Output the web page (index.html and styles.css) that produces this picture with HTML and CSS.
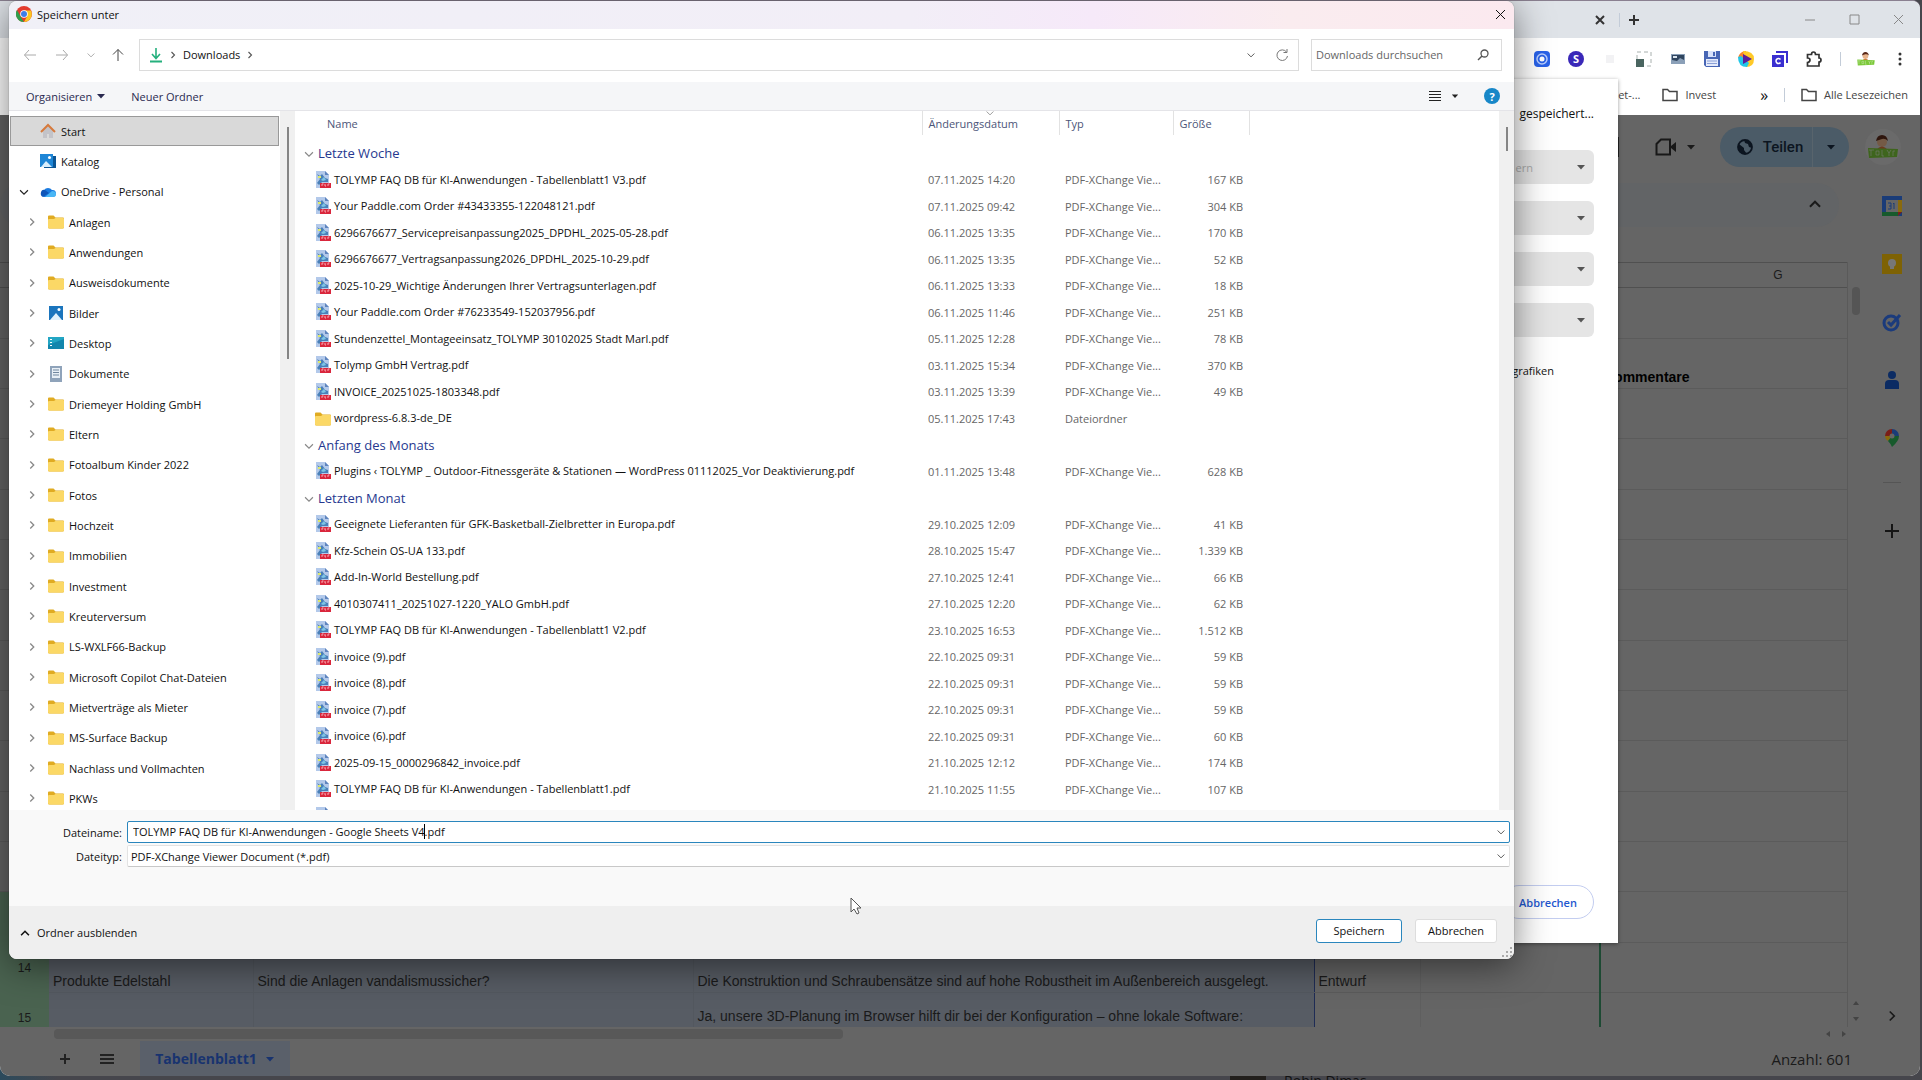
FILE: index.html
```html
<!DOCTYPE html>
<html lang="de">
<head>
  <meta charset="UTF-8">
  <title>Speichern unter</title>
  <link rel="stylesheet" href="styles.css">
</head>
<body>
  <!-- Icon definitions -->
  <svg class="defs" aria-hidden="true">
    <symbol id="folder" viewBox="0 0 16 16"><path d="M0 2.500Q0 1.500 1 1.500h4.500L7.500 3.500H15q1 0 1 1V13q0 1.500-1.500 1.500h-13Q0 14.500 0 13z" fill="#e0ab22"/><path d="M0 6q0-1 1-1h5l1.500-1H15q1 0 1 1v8q0 1.500-1.500 1.500h-13Q0 14.500 0 13z" fill="#fbd866"/></symbol>
    <symbol id="pdf" viewBox="0 0 16 18"><path d="M1 0h9l4 4v13H1z" fill="#b3c9ea"/><path d="M10 0v4h4z" fill="#5f84bd"/><path d="M2 3l3 2 2-2 3 4 3 1v3H7L4 14 2 12l3-4z" fill="#4a80b8"/><path d="M3 5h3v2H3z" fill="#dce86b"/><path d="M6 9l3-3 2 3-3 1z" fill="#7cc4e6"/><path d="M5 12h11v5H5z" fill="#d9263c"/><path d="M7 15v-2h1.500M10 13v2h1M13 15v-2h1.500" stroke="#f7a8b0" fill="none"/></symbol>
    <symbol id="right" viewBox="0 0 16 16"><path d="M6 4l4 4-4 4" fill="none" stroke="currentColor" stroke-width="1.500"/></symbol>
    <symbol id="down" viewBox="0 0 16 16"><path d="M3.500 6L8 10.500 12.500 6" fill="none" stroke="currentColor" stroke-width="1.300"/></symbol>
    <symbol id="up" viewBox="0 0 16 16"><path d="M3.500 10.500L8 6l4.500 4.500" fill="none" stroke="currentColor" stroke-width="1.800"/></symbol>
    <symbol id="caret" viewBox="0 0 10 10"><path d="M1 3h8L5 7.500z" fill="currentColor"/></symbol>
    <symbol id="outline-folder" viewBox="0 0 16 14"><path d="M1 1.500h4.500l2 2H15v9H1z" fill="none" stroke="currentColor" stroke-width="1.500"/></symbol>
    <symbol id="avatar" viewBox="0 0 32 24"><circle cx="15" cy="7" r="5" fill="#e8b48c"/><path d="M9 6q1-6 6-6t6 6q-3-3-6-2T9 6z" fill="#5b2a1a"/><path d="M9 15q6-7 12 0z" fill="#d9713a"/><path d="M1 13l30 1-1 8-28 1z" fill="#7cc93a"/><path d="M4 15v6M2 15h5M9 16h3v4H9zM15 15v6h2M20 15l2 3 2-3M22 18v3M26 21v-5h2" stroke="#fff" fill="none" opacity=".5"/></symbol>
  </svg>

  <!-- Browser -->
  <div class="browser">
    <div class="tabs">
      <button class="tab-close" aria-label="Tab schließen"><svg width="10" height="10"><path d="M1 1l8 8M9 1L1 9" stroke="#333" stroke-width="2"/></svg></button>
      <span class="bar"></span>
      <button class="tab-new" aria-label="Neuer Tab"><svg width="12" height="12"><path d="M6 1v10M1 6h10" stroke="#333" stroke-width="2"/></svg></button>
      <button class="win" aria-label="Minimieren"><svg width="10" height="10"><path d="M0 5h10" stroke="#888"/></svg></button>
      <button class="win" aria-label="Maximieren"><svg width="11" height="11"><path d="M1 1h9v9H1z" stroke="#888" fill="none"/></svg></button>
      <button class="win" aria-label="Schließen"><svg width="11" height="11"><path d="M1 1l9 9M10 1l-9 9" stroke="#888"/></svg></button>
    </div>

    <div class="extensions">
      <span><svg width="16" height="16"><rect width="16" height="16" rx="4" fill="#2962e8"/><circle cx="8" cy="8" r="5" fill="none" stroke="#b9ceff" stroke-width="1.500"/><circle cx="8" cy="8" r="2.500" fill="#fff"/></svg></span>
      <span><b class="badge-s">S</b></span>
      <span><svg width="8" height="8"><path d="M0 0h8v8H0z" fill="#f2f2f4"/></svg></span>
      <span><svg width="16" height="16"><path d="M1 1h14v14H1z" fill="none" stroke="#a8b0ae" stroke-dasharray="4 3"/><path d="M0 8h8v8H0z" fill="#4a6560"/></svg></span>
      <span><svg width="14" height="12"><path d="M0 1h14v10H0z" fill="#8ba0b8"/><path d="M1 2h12v5L9 5 6 8 1 7z" fill="#30455f"/><path d="M2 3h4v2H2z" fill="#d9e4ee"/></svg></span>
      <span><svg width="16" height="16"><path d="M0 0h16v16H2l-2-2z" fill="#4866b5"/><path d="M4 0h8v6H4z" fill="#d8e2fa"/><path d="M9 1h2v4H9z" fill="#4866b5"/><path d="M2 8h12v7H2z" fill="#e4eafb"/><path d="M3 10h10M3 12.500h10" stroke="#8ba1d8"/></svg></span>
      <span><svg width="16" height="16"><path d="M8 0a8 8 0 0 0-8 7l8 1z" fill="#f9822c"/><path d="M5 0q11 0 11 8t-8 8z" fill="#ffc928"/><path d="M0 6q0 10 9 10l2-4-8-7z" fill="#22c7e8"/><path d="M5 3l9 5-9 5z" fill="#5a1c9c"/></svg></span>
      <span><svg width="16" height="16"><path d="M4 1h11v11" fill="none" stroke="#3a2fd0" stroke-width="2"/><path d="M0 4h12v12H0z" fill="#3a2fd0"/><path d="M8.500 8.500a2.500 2.500 0 1 0 0 3" stroke="#fff" stroke-width="1.500" fill="none"/></svg></span>
      <span><svg width="16" height="16"><path d="M1.500 3.500h4q0-2.500 2-2.500t2 2.500H13V7q2 0 2 2t-2 2v4H1.500v-3.500q2.500-.5 2.500-2.500T1.500 7z" fill="none" stroke="#333" stroke-width="1.700"/></svg></span>
      <span class="narrow"><i class="bar"></i></span>
      <span><svg width="20" height="14"><use href="#avatar"/></svg></span>
      <span><svg width="4" height="16" fill="#333"><circle cx="2" cy="3" r="1.500"/><circle cx="2" cy="8" r="1.500"/><circle cx="2" cy="13" r="1.500"/></svg></span>
    </div>

    <div class="bookmarks">
      <a href="#" class="cut">et-...</a>
      <a href="#" class="invest"><svg width="16" height="14"><use href="#outline-folder"/></svg>Invest</a>
      <span class="more">»</span>
      <span class="bar"></span>
      <a href="#" class="all"><svg width="16" height="14"><use href="#outline-folder"/></svg>Alle Lesezeichen</a>
    </div>

    <!-- Spreadsheet -->
    <div class="sheets">
      <div class="sheet-head">
        <span class="comment-edge"></span>
        <button class="meet" aria-label="Videoanruf"><svg width="22" height="18"><path d="M6 1.500h9v15H1.500V6z" fill="none" stroke="#181818" stroke-width="2"/><path d="M16 8l5-4v10l-5-4z" fill="#181818"/></svg><svg width="10" height="10"><use href="#caret"/></svg></button>
        <div class="share">
          <button><svg width="16" height="16"><circle cx="8" cy="8" r="7" fill="none" stroke="#0c1520" stroke-width="1.800"/><path d="M2 5l5 4v2l3 4q-8 1-9-7zM7 1l1 3 3 1 1 3 3 1q0-6-6-8z" fill="#0c1520"/></svg>Teilen</button>
          <button class="share-more" aria-label="Optionen"><svg width="10" height="10"><use href="#caret"/></svg></button>
        </div>
        <span class="account"><svg width="32" height="24"><use href="#avatar"/></svg></span>
      </div>

      <div class="sheet-main">
        <div class="sheet-left">
          <div class="sheet-tools"><svg width="18" height="18"><use href="#up"/></svg></div>
          <div class="grid-wrap">
            <div class="grid">
              <table>
                <colgroup><col class="c-num"><col class="c-a"><col class="c-b"><col class="c-c"><col class="c-d"><col class="c-e"><col class="c-g"></colgroup>
                <thead><tr><th colspan="6"></th><th>G</th></tr></thead>
                <tbody>
                  <tr><td colspan="7"></td></tr>
                  <tr><td colspan="6"></td><td class="title">Kommentare</td></tr>
                  <tr><td colspan="7"></td></tr>
                  <tr><td colspan="7"></td></tr>
                  <tr><td colspan="7"></td></tr>
                  <tr><td colspan="7"></td></tr>
                  <tr><td colspan="7"></td></tr>
                  <tr><td colspan="7"></td></tr>
                  <tr><td colspan="7"></td></tr>
                  <tr><td colspan="7"></td></tr>
                  <tr><td colspan="7"></td></tr>
                  <tr><td colspan="7"></td></tr>
                  <tr class="sel"><th></th><td></td><td></td><td></td><td></td><td></td><td></td></tr>
                  <tr class="sel"><th>14</th><td>Produkte Edelstahl</td><td>Sind die Anlagen vandalismussicher?</td><td>Die Konstruktion und Schraubensätze sind auf hohe Robustheit im Außenbereich ausgelegt.</td><td>Entwurf</td><td></td><td></td></tr>
                  <tr class="sel"><th>15</th><td></td><td></td><td class="mid">Ja, unsere 3D-Planung im Browser hilft dir bei der Konfiguration – ohne lokale Software:</td><td></td><td></td><td></td></tr>
                </tbody>
              </table>
            </div>
            <div class="vscroll"><i></i><svg width="8" height="8"><path d="M1 6l3-4 3 4z"/></svg><svg width="8" height="8"><path d="M1 2l3 4 3-4z"/></svg></div>
          </div>
          <div class="hscroll"><i></i><svg width="8" height="8"><path d="M6 1L2 4l4 3z"/></svg><svg width="8" height="8"><path d="M2 1l4 3-4 3z"/></svg></div>
        </div>

        <div class="side">
          <svg width="20" height="20"><path d="M0 0h20v20H0z" fill="#1a3c78"/><path d="M16 4h4v12h-4z" fill="#8a6a0c"/><path d="M0 16h16v4H0z" fill="#175a2c"/><path d="M16 16h4l-4 4z" fill="#7a2018"/><path d="M4 4h12v12H4z" fill="#666"/><path d="M6 7h3v6H6M7 10h2M12 13V7l-1 1" fill="none" stroke="#1a3c78"/></svg>
          <svg width="20" height="20"><path d="M0 0h20v20H0z" fill="#7e6204"/><circle cx="10" cy="9" r="4" fill="#777"/><path d="M8 12h4v3H8z" fill="#777"/></svg>
          <svg width="20" height="20"><circle cx="9" cy="11" r="7" fill="none" stroke="#1b3b7c" stroke-width="3"/><path d="M6 10l3 3 9-10" fill="none" stroke="#1b3b7c" stroke-width="3"/></svg>
          <svg width="20" height="20" fill="#0b2b63"><circle cx="10" cy="5" r="4"/><path d="M3 19v-5q0-4 4-4h6q4 0 4 4v5z"/></svg>
          <svg width="20" height="20"><path d="M10 1a7 7 0 0 0-7 7h7z" fill="#7a1e18"/><path d="M10 1a7 7 0 0 1 7 7h-7z" fill="#1a3c78"/><path d="M3 8q0 3 3 5l4-5z" fill="#8a6a0c"/><path d="M17 8q0 5-7 11-1-3-4-6l4-5z" fill="#175a2c"/><circle cx="10" cy="8" r="2.500" fill="#666"/></svg>
          <hr>
          <svg width="16" height="16"><path d="M8 1v14M1 8h14" stroke="#151515" stroke-width="2"/></svg>
          <svg class="side-end" width="18" height="18"><use href="#right"/></svg>
        </div>
      </div>

      <div class="sheet-foot">
        <button class="add" aria-label="Tabelle hinzufügen"><svg width="12" height="12"><path d="M6 1v10M1 6h10" stroke="#222" stroke-width="2"/></svg></button>
        <button class="list" aria-label="Alle Tabellen"><svg width="14" height="12"><path d="M0 2h14M0 6h14M0 10h14" stroke="#222" stroke-width="2"/></svg></button>
        <button class="sheet-tab">Tabellenblatt1<svg width="10" height="10"><use href="#caret"/></svg></button>
        <span class="count">Anzahl: 601</span>
      </div>
    </div>
  </div>
  <!-- Window below the browser -->
  <div class="edge"><i></i><span>Robin Dimas</span></div>

  <!-- Print dialog -->
  <div class="print">
    <p class="print-title">gespeichert...</p>
    <div class="drop"><span>ern</span><svg width="10" height="10"><use href="#caret"/></svg></div>
    <div class="drop"><svg width="10" height="10"><use href="#caret"/></svg></div>
    <div class="drop"><svg width="10" height="10"><use href="#caret"/></svg></div>
    <div class="drop"><svg width="10" height="10"><use href="#caret"/></svg></div>
    <p class="graphics">grafiken</p>
    <button>Abbrechen</button>
  </div>

  <!-- Save dialog -->
  <div class="save">
    <div class="titlebar">
      <svg width="16" height="16"><circle cx="8" cy="8" r="8" fill="#e33b2e"/><path d="M1 4l5 9 2 3A8 8 0 0 1 1 4z" fill="#2f9e4c"/><path d="M15 4.500H8l3 6-3 5.500a8 8 0 0 0 7-11.500z" fill="#fbc521"/><circle cx="8" cy="8" r="3.800" fill="#fff"/><circle cx="8" cy="8" r="3" fill="#3d7de8"/></svg>
      <span>Speichern unter</span>
      <button aria-label="Schließen"><svg width="11" height="11"><path d="M1 1l9 9M10 1l-9 9" stroke="#111"/></svg></button>
    </div>

    <div class="nav">
      <button class="off" aria-label="Zurück"><svg width="14" height="14"><path d="M13 7H1.500M6 2L1.500 7 6 12" stroke="currentColor" fill="none"/></svg></button>
      <button class="off" aria-label="Vorwärts"><svg width="14" height="14"><path d="M1 7h11.500M8 2l4.500 5L8 12" stroke="currentColor" fill="none"/></svg></button>
      <button class="off recent" aria-label="Zuletzt besucht"><svg width="12" height="12"><use href="#down"/></svg></button>
      <button class="upper" aria-label="Nach oben"><svg width="14" height="14"><path d="M7 13V1.500M2 6.500l5-5 5 5" stroke="currentColor" fill="none"/></svg></button>
      <div class="address">
        <svg width="14" height="16"><path d="M7 1v10M3 7l4 4.500L11 7" stroke="#25b07d" stroke-width="1.600" fill="none"/><path d="M1 14.500h12" stroke="#25b07d" stroke-width="2"/></svg>
        <svg width="12" height="12"><use href="#right"/></svg>
        <span>Downloads</span>
        <svg width="12" height="12"><use href="#right"/></svg>
        <svg class="history" width="12" height="12"><use href="#down"/></svg>
        <svg width="14" height="14"><path d="M11.500 4A5.300 5.300 0 1 0 12.500 8M12 1v3.500H8.500" stroke="#777" fill="none"/></svg>
      </div>
      <div class="search">
        <input type="text" placeholder="Downloads durchsuchen" aria-label="Downloads durchsuchen">
        <svg width="12" height="12"><circle cx="7.500" cy="4.500" r="3.500" stroke="#555" fill="none" stroke-width="1.300"/><path d="M5 7l-4 4" stroke="#555" stroke-width="1.500"/></svg>
      </div>
    </div>

    <div class="tools">
      <button>Organisieren<svg width="10" height="10"><use href="#caret"/></svg></button>
      <button>Neuer Ordner</button>
      <button class="view" aria-label="Ansicht"><svg width="12" height="12"><path d="M0 1.500h12M0 4.500h12M0 7.500h12M0 10.500h12" stroke="#222"/></svg><svg width="8" height="8"><use href="#caret"/></svg></button>
      <button class="help">?</button>
    </div>

    <div class="panes">
      <ul class="tree">
        <li class="top active"><svg width="16" height="16"><path d="M3 7l5-4 5 4v8h-4v-4H7v4H3z" fill="#c3c3c8"/><path d="M1 9l7-7 7 7" stroke="#d67a3c" stroke-width="2" fill="none"/></svg>Start</li>
        <li class="top"><svg width="16" height="16"><path d="M4 3h12v12H4z" fill="#0b5594"/><path d="M0 1h13v13H0z" fill="#1e86d6"/><path d="M1 14l5-6 6 6z" fill="#d8eefc"/><circle cx="9.500" cy="4.500" r="1.500" fill="#fff"/></svg>Katalog</li>
        <li class="top open"><svg class="tw" width="14" height="14"><use href="#down"/></svg><svg width="16" height="16"><path d="M4 13a4 4 0 0 1 0-7 5 5 0 0 1 8 0 3.500 3.500 0 0 1 1 7z" fill="#1a7be0"/><path d="M5 13l7-6q4 0 4 3t-3 3z" fill="#49b6f5"/><path d="M1 8q1-3 4-2l4 3-6 4Q0 12 1 8z" fill="#0f55b8"/></svg>OneDrive - Personal</li>
        <li><svg class="tw" width="14" height="14"><use href="#right"/></svg><svg width="16" height="16"><use href="#folder"/></svg>Anlagen</li>
        <li><svg class="tw" width="14" height="14"><use href="#right"/></svg><svg width="16" height="16"><use href="#folder"/></svg>Anwendungen</li>
        <li><svg class="tw" width="14" height="14"><use href="#right"/></svg><svg width="16" height="16"><use href="#folder"/></svg>Ausweisdokumente</li>
        <li><svg class="tw" width="14" height="14"><use href="#right"/></svg><svg width="16" height="16"><path d="M1 1h14v14H1z" fill="#1b75bd"/><path d="M2 15l6-7 6 7z" fill="#e1f2fc"/><circle cx="11" cy="4.500" r="1.500" fill="#fff"/></svg>Bilder</li>
        <li><svg class="tw" width="14" height="14"><use href="#right"/></svg><svg width="16" height="16"><path d="M0 2h16v12H0z" fill="#23a6c4"/><path d="M0 10l16-6v10H0z" fill="#1386ad"/><path d="M2 4h2v1H2zM2 7h2v1H2zM2 10h2v1H2z" fill="#fff"/></svg>Desktop</li>
        <li><svg class="tw" width="14" height="14"><use href="#right"/></svg><svg width="16" height="16"><path d="M2 0h12v16H2z" fill="#8fa3ba"/><path d="M4 2h8v10H4z" fill="#e8eff6"/><path d="M5 4h6M5 6.500h6M5 9h6" stroke="#71879f"/></svg>Dokumente</li>
        <li><svg class="tw" width="14" height="14"><use href="#right"/></svg><svg width="16" height="16"><use href="#folder"/></svg>Driemeyer Holding GmbH</li>
        <li><svg class="tw" width="14" height="14"><use href="#right"/></svg><svg width="16" height="16"><use href="#folder"/></svg>Eltern</li>
        <li><svg class="tw" width="14" height="14"><use href="#right"/></svg><svg width="16" height="16"><use href="#folder"/></svg>Fotoalbum Kinder 2022</li>
        <li><svg class="tw" width="14" height="14"><use href="#right"/></svg><svg width="16" height="16"><use href="#folder"/></svg>Fotos</li>
        <li><svg class="tw" width="14" height="14"><use href="#right"/></svg><svg width="16" height="16"><use href="#folder"/></svg>Hochzeit</li>
        <li><svg class="tw" width="14" height="14"><use href="#right"/></svg><svg width="16" height="16"><use href="#folder"/></svg>Immobilien</li>
        <li><svg class="tw" width="14" height="14"><use href="#right"/></svg><svg width="16" height="16"><use href="#folder"/></svg>Investment</li>
        <li><svg class="tw" width="14" height="14"><use href="#right"/></svg><svg width="16" height="16"><use href="#folder"/></svg>Kreuterversum</li>
        <li><svg class="tw" width="14" height="14"><use href="#right"/></svg><svg width="16" height="16"><use href="#folder"/></svg>LS-WXLF66-Backup</li>
        <li><svg class="tw" width="14" height="14"><use href="#right"/></svg><svg width="16" height="16"><use href="#folder"/></svg>Microsoft Copilot Chat-Dateien</li>
        <li><svg class="tw" width="14" height="14"><use href="#right"/></svg><svg width="16" height="16"><use href="#folder"/></svg>Mietverträge als Mieter</li>
        <li><svg class="tw" width="14" height="14"><use href="#right"/></svg><svg width="16" height="16"><use href="#folder"/></svg>MS-Surface Backup</li>
        <li><svg class="tw" width="14" height="14"><use href="#right"/></svg><svg width="16" height="16"><use href="#folder"/></svg>Nachlass und Vollmachten</li>
        <li><svg class="tw" width="14" height="14"><use href="#right"/></svg><svg width="16" height="16"><use href="#folder"/></svg>PKWs</li>
      </ul>
      <div class="scroll tree-scroll"><i></i></div>

      <div class="files">
        <svg class="sort" width="12" height="12"><use href="#down"/></svg>
        <table>
          <colgroup><col class="f-name"><col class="f-date"><col class="f-type"><col class="f-size"><col></colgroup>
          <thead><tr><th>Name</th><th>Änderungsdatum</th><th>Typ</th><th>Größe</th><th></th></tr></thead>
          <tbody>
            <tr class="group"><td colspan="5"><svg width="14" height="14"><use href="#down"/></svg>Letzte Woche</td></tr>
            <tr><td><svg width="16" height="18"><use href="#pdf"/></svg>TOLYMP FAQ DB für KI-Anwendungen - Tabellenblatt1 V3.pdf</td><td>07.11.2025 14:20</td><td>PDF-XChange Vie...</td><td>167 KB</td></tr>
            <tr><td><svg width="16" height="18"><use href="#pdf"/></svg>Your Paddle.com Order #43433355-122048121.pdf</td><td>07.11.2025 09:42</td><td>PDF-XChange Vie...</td><td>304 KB</td></tr>
            <tr><td><svg width="16" height="18"><use href="#pdf"/></svg>6296676677_Servicepreisanpassung2025_DPDHL_2025-05-28.pdf</td><td>06.11.2025 13:35</td><td>PDF-XChange Vie...</td><td>170 KB</td></tr>
            <tr><td><svg width="16" height="18"><use href="#pdf"/></svg>6296676677_Vertragsanpassung2026_DPDHL_2025-10-29.pdf</td><td>06.11.2025 13:35</td><td>PDF-XChange Vie...</td><td>52 KB</td></tr>
            <tr><td><svg width="16" height="18"><use href="#pdf"/></svg>2025-10-29_Wichtige Änderungen Ihrer Vertragsunterlagen.pdf</td><td>06.11.2025 13:33</td><td>PDF-XChange Vie...</td><td>18 KB</td></tr>
            <tr><td><svg width="16" height="18"><use href="#pdf"/></svg>Your Paddle.com Order #76233549-152037956.pdf</td><td>06.11.2025 11:46</td><td>PDF-XChange Vie...</td><td>251 KB</td></tr>
            <tr><td><svg width="16" height="18"><use href="#pdf"/></svg>Stundenzettel_Montageeinsatz_TOLYMP 30102025 Stadt Marl.pdf</td><td>05.11.2025 12:28</td><td>PDF-XChange Vie...</td><td>78 KB</td></tr>
            <tr><td><svg width="16" height="18"><use href="#pdf"/></svg>Tolymp GmbH Vertrag.pdf</td><td>03.11.2025 15:34</td><td>PDF-XChange Vie...</td><td>370 KB</td></tr>
            <tr><td><svg width="16" height="18"><use href="#pdf"/></svg>INVOICE_20251025-1803348.pdf</td><td>03.11.2025 13:39</td><td>PDF-XChange Vie...</td><td>49 KB</td></tr>
            <tr><td><svg width="16" height="16"><use href="#folder"/></svg>wordpress-6.8.3-de_DE</td><td>05.11.2025 17:43</td><td>Dateiordner</td><td></td></tr>
            <tr class="group"><td colspan="5"><svg width="14" height="14"><use href="#down"/></svg>Anfang des Monats</td></tr>
            <tr><td><svg width="16" height="18"><use href="#pdf"/></svg>Plugins ‹ TOLYMP _ Outdoor-Fitnessgeräte &amp; Stationen — WordPress 01112025_Vor Deaktivierung.pdf</td><td>01.11.2025 13:48</td><td>PDF-XChange Vie...</td><td>628 KB</td></tr>
            <tr class="group"><td colspan="5"><svg width="14" height="14"><use href="#down"/></svg>Letzten Monat</td></tr>
            <tr><td><svg width="16" height="18"><use href="#pdf"/></svg>Geeignete Lieferanten für GFK-Basketball-Zielbretter in Europa.pdf</td><td>29.10.2025 12:09</td><td>PDF-XChange Vie...</td><td>41 KB</td></tr>
            <tr><td><svg width="16" height="18"><use href="#pdf"/></svg>Kfz-Schein OS-UA 133.pdf</td><td>28.10.2025 15:47</td><td>PDF-XChange Vie...</td><td>1.339 KB</td></tr>
            <tr><td><svg width="16" height="18"><use href="#pdf"/></svg>Add-In-World Bestellung.pdf</td><td>27.10.2025 12:41</td><td>PDF-XChange Vie...</td><td>66 KB</td></tr>
            <tr><td><svg width="16" height="18"><use href="#pdf"/></svg>4010307411_20251027-1220_YALO GmbH.pdf</td><td>27.10.2025 12:20</td><td>PDF-XChange Vie...</td><td>62 KB</td></tr>
            <tr><td><svg width="16" height="18"><use href="#pdf"/></svg>TOLYMP FAQ DB für KI-Anwendungen - Tabellenblatt1 V2.pdf</td><td>23.10.2025 16:53</td><td>PDF-XChange Vie...</td><td>1.512 KB</td></tr>
            <tr><td><svg width="16" height="18"><use href="#pdf"/></svg>invoice (9).pdf</td><td>22.10.2025 09:31</td><td>PDF-XChange Vie...</td><td>59 KB</td></tr>
            <tr><td><svg width="16" height="18"><use href="#pdf"/></svg>invoice (8).pdf</td><td>22.10.2025 09:31</td><td>PDF-XChange Vie...</td><td>59 KB</td></tr>
            <tr><td><svg width="16" height="18"><use href="#pdf"/></svg>invoice (7).pdf</td><td>22.10.2025 09:31</td><td>PDF-XChange Vie...</td><td>59 KB</td></tr>
            <tr><td><svg width="16" height="18"><use href="#pdf"/></svg>invoice (6).pdf</td><td>22.10.2025 09:31</td><td>PDF-XChange Vie...</td><td>60 KB</td></tr>
            <tr><td><svg width="16" height="18"><use href="#pdf"/></svg>2025-09-15_0000296842_invoice.pdf</td><td>21.10.2025 12:12</td><td>PDF-XChange Vie...</td><td>174 KB</td></tr>
            <tr><td><svg width="16" height="18"><use href="#pdf"/></svg>TOLYMP FAQ DB für KI-Anwendungen - Tabellenblatt1.pdf</td><td>21.10.2025 11:55</td><td>PDF-XChange Vie...</td><td>107 KB</td></tr>
            <tr><td><svg width="16" height="18"><use href="#pdf"/></svg></td><td></td><td></td><td></td></tr>
          </tbody>
        </table>
      </div>
      <div class="scroll files-scroll"><i></i></div>
    </div>

    <div class="fields">
      <label for="filename">Dateiname:</label>
      <div class="field">
        <input type="text" id="filename" value="TOLYMP FAQ DB für KI-Anwendungen - Google Sheets V4.pdf">
        <i class="text-caret"></i>
        <svg width="12" height="12"><use href="#down"/></svg>
      </div>
      <label for="filetype">Dateityp:</label>
      <div class="field">
        <select id="filetype"><option>PDF-XChange Viewer Document (*.pdf)</option></select>
        <svg width="12" height="12"><use href="#down"/></svg>
      </div>
    </div>

    <div class="actions">
      <button class="hide"><svg width="14" height="14"><use href="#up"/></svg>Ordner ausblenden</button>
      <button class="primary">Speichern</button>
      <button class="cancel">Abbrechen</button>
      <svg class="grip" width="10" height="10" fill="#aaa"><path d="M8 0h2v2H8zM8 4h2v2H8zM8 8h2v2H8zM4 4h2v2H4zM4 8h2v2H4zM0 8h2v2H0z"/></svg>
    </div>
  </div>

  <svg class="pointer" width="13" height="19"><path d="M1 1v14l3-3 3 5 2-1-2-5h4z" fill="#fff" stroke="#555"/></svg>
</body>
</html>
```
FILE: styles.css
```css
* {
  box-sizing: border-box;
}

body {
  margin: 0;
  height: 100vh;
  overflow: hidden;
  position: relative;
  background: linear-gradient(90deg, #2b4a5c, #46464c 3%, #46464c);
  font-family: "Open Sans", "Noto Sans", sans-serif;
  font-size: 11px;
  color: #111;
}

button, input, select {
  font: inherit;
  color: inherit;
}

button {
  display: flex;
  align-items: center;
  justify-content: center;
  padding: 0;
  border: none;
  background: none;
}

svg {
  flex: none;
}

.defs {
  position: absolute;
  width: 0;
  height: 0;
}

.bar {
  width: 1px;
  height: 14px;
  background: #c3ccd8;
}

/* browser */
.browser {
  display: flex;
  flex-direction: column;
  height: calc(100vh - 4px);
  margin-right: 2px;
  border-top: 1px solid #8a8090;
  border-radius: 0 8px 10px 10px;
  overflow: hidden;
  background: #fff;
}

.tabs {
  display: flex;
  align-items: center;
  justify-content: flex-end;
  height: 37px;
  background: #dfe3e8;
}

.tab-close {
  width: 38px;
}

.tab-new {
  width: 28px;
  margin-right: 140px;
}

.win {
  width: 44px;
}

.extensions {
  display: flex;
  align-items: center;
  justify-content: flex-end;
  height: 42px;
  padding-right: 3px;
}

.extensions span {
  display: flex;
  justify-content: center;
  width: 34px;
}

.extensions .narrow {
  width: 18px;
}

.badge-s {
  width: 16px;
  height: 16px;
  border-radius: 8px;
  background: #3a28b8;
  color: #fff;
  line-height: 16px;
  text-align: center;
}

.bookmarks {
  display: flex;
  align-items: center;
  justify-content: flex-end;
  height: 35px;
  padding: 0 12px 6px 0;
}

.bookmarks a {
  display: flex;
  align-items: center;
  gap: 7px;
  color: #444;
  text-decoration: none;
}

.bookmarks .cut {
  margin-right: 22px;
}

.bookmarks .more {
  margin: 0 16px 0 44px;
  font-size: 16px;
  line-height: 16px;
}

.bookmarks .all {
  margin-left: 16px;
}

/* spreadsheet */
.sheets {
  display: flex;
  flex-direction: column;
  flex: 1;
  min-height: 0;
  background: #656565;
  color: #1a1a1a;
}

.sheet-head {
  display: flex;
  align-items: center;
  justify-content: flex-end;
  height: 64px;
  padding-right: 19px;
}

.comment-edge {
  width: 2px;
  height: 20px;
  margin-right: 36px;
  background: #222;
}

.meet {
  gap: 9px;
  margin-right: 24px;
}

.share {
  display: flex;
  height: 40px;
  margin-right: 16px;
  border-radius: 20px;
  overflow: hidden;
  background: #4b5b67;
  color: #0c1520;
}

.share button {
  gap: 10px;
  width: 92px;
  padding-left: 8px;
  font-family: Roboto, sans-serif;
  font-size: 15px;
  font-weight: 500;
}

.share .share-more {
  width: 37px;
  padding: 0;
  border-left: 1px solid #58646c;
}

.account {
  display: flex;
  align-items: center;
  justify-content: center;
  width: 36px;
  height: 36px;
  border-radius: 18px;
  background: #6a6a6a;
}

.account svg {
  filter: brightness(50%);
}

.sheet-main {
  display: flex;
  flex: 1;
  min-height: 0;
}

.sheet-left {
  display: flex;
  flex-direction: column;
  flex: 1;
  min-width: 0;
}

.sheet-tools {
  display: flex;
  justify-content: flex-end;
  height: 44px;
  margin: 4px 25px 35px 0;
  padding: 12px 15px;
  border-radius: 22px;
  background: #626466;
}

.grid-wrap {
  display: flex;
  flex: 1;
  min-height: 0;
}

.grid {
  flex: 1;
  overflow: hidden;
  border-right: 1px solid #5a5a5a;
}

.grid table {
  width: 1956px;
  table-layout: fixed;
  border-collapse: collapse;
  font-family: "Liberation Sans", Arial, sans-serif;
  font-size: 14px;
}

.c-num { width: 49px; }
.c-a { width: 204px; }
.c-b { width: 440px; }
.c-c { width: 621px; }
.c-d { width: 106px; }
.c-e { width: 180px; }
.c-g { width: 356px; }

.grid th {
  padding: 0;
  font-size: 12px;
  font-weight: normal;
}

.grid thead th {
  height: 25px;
  border-top: 1px solid #505050;
  border-bottom: 1px solid #505050;
}

.grid td {
  height: 50px;
  padding: 0 4px 3px;
  border-bottom: 1px solid #5b5b5b;
  vertical-align: bottom;
  white-space: nowrap;
}

.grid tr:nth-child(3n+1) td {
  height: 51px;
}

.grid .title {
  font-weight: bold;
  color: #000;
}

.sel th {
  background: #4a6350;
}

.sel td {
  border-right: 1px solid #5f5f5f;
}

.sel td:nth-child(2), .sel td:nth-child(3), .sel td:nth-child(4) {
  background: #575c64;
  border-color: #53585f;
}

.sel td:nth-child(4) {
  border-right-color: #1f2c55;
}

.sel td:nth-child(6) {
  border-right: 2px solid #1d4a33;
}

.grid td.mid {
  vertical-align: middle;
}

.vscroll {
  display: flex;
  flex-direction: column;
  align-items: center;
  justify-content: flex-end;
  gap: 8px;
  width: 16px;
  padding: 25px 0 4px;
  fill: #444;
}

.vscroll i {
  width: 8px;
  height: 28px;
  margin-bottom: auto;
  border-radius: 4px;
  background: #555;
}

.hscroll {
  display: flex;
  align-items: center;
  gap: 8px;
  height: 14px;
  padding: 0 16px 0 54px;
  fill: #444;
}

.hscroll i {
  width: 44%;
  height: 10px;
  margin-right: auto;
  border-radius: 4px;
  background: #585858;
}

.side {
  display: flex;
  flex-direction: column;
  align-items: center;
  gap: 38px;
  width: 56px;
  padding: 17px 0 16px;
}

.side hr {
  width: 18px;
  margin: -4px 0 2px;
  border: 0;
  border-top: 1px solid #555;
}

.side-end {
  margin-top: auto;
}

.sheet-foot {
  display: flex;
  align-items: center;
  height: 35px;
  padding-right: 68px;
}

.add {
  width: 42px;
  margin-left: 44px;
}

.list {
  width: 42px;
}

.sheet-tab {
  gap: 8px;
  width: 150px;
  height: 35px;
  margin-left: 12px;
  background: #5a606a;
  color: #18336f;
  font-size: 14px;
  font-weight: bold;
}

.count {
  margin-left: auto;
  font-size: 15px;
}

.edge {
  display: flex;
  gap: 18px;
  height: 4px;
  padding-left: 64%;
  overflow: hidden;
  color: #111;
  font-size: 14px;
  line-height: 10px;
}

.edge i {
  width: 36px;
  background: #221f1c;
}

/* print dialog */
.print {
  position: absolute;
  top: 79px;
  right: 304px;
  bottom: 137px;
  display: flex;
  flex-direction: column;
  width: 500px;
  padding: 26px 24px 24px;
  background: #fff;
  box-shadow: 0 1px 4px rgba(0, 0, 0, 0.4);
}

.print p {
  margin: 0;
  line-height: 18px;
}

.print .print-title {
  margin-bottom: 27px;
  font-size: 12px;
  text-align: right;
}

.drop {
  display: flex;
  align-items: center;
  justify-content: flex-end;
  gap: 43px;
  height: 34px;
  margin-bottom: 17px;
  padding: 0 8px;
  border-radius: 6px;
  background: #e5e5e5;
  color: #555;
}

.drop span {
  color: #aaa;
}

.print .graphics {
  margin: 8px 40px auto 0;
  text-align: right;
}

.print button {
  align-self: flex-end;
  width: 92px;
  height: 34px;
  border: 1px solid #c3cdf0;
  border-radius: 17px;
  color: #1f58cf;
  font-weight: 600;
}

/* save dialog */
.save {
  position: absolute;
  top: 1px;
  right: 408px;
  bottom: 121px;
  left: 9px;
  display: flex;
  flex-direction: column;
  border-radius: 8px;
  overflow: hidden;
  background: #fff;
  box-shadow: 0 6px 36px rgba(0, 0, 0, 0.5), 0 0 1px rgba(0, 0, 0, 0.6);
}

.titlebar {
  display: flex;
  align-items: center;
  gap: 5px;
  height: 28px;
  padding: 0 7px 2px;
  background: linear-gradient(90deg, #f0f0f7, #f2eef7 60%, #f6e9f9 72%, #faecef 85%, #fbe9ef);
}

.titlebar button {
  width: 14px;
  height: 20px;
  margin-left: auto;
}

.nav {
  display: flex;
  align-items: center;
  height: 53px;
  padding: 0 12px 1px 5px;
}

.nav button {
  width: 32px;
  color: #444;
}

.nav .off {
  color: #aaa;
}

.nav .recent {
  width: 26px;
}

.nav .upper {
  width: 28px;
  margin-right: 7px;
}

.address {
  display: flex;
  align-items: center;
  flex: 1;
  gap: 4px;
  height: 32px;
  margin-right: 12px;
  padding: 0 9px 1px;
  border: 1px solid #dcdcdc;
}

.address svg {
  color: #555;
}

.address .history {
  margin: 0 14px 0 auto;
}

.search {
  display: flex;
  align-items: center;
  width: 191px;
  height: 32px;
  padding: 0 12px 1px 4px;
  border: 1px solid #dcdcdc;
}

.search input {
  flex: 1;
  min-width: 0;
  padding: 0;
  border: none;
  outline: none;
}

.search input::placeholder {
  color: #666;
}

.tools {
  display: flex;
  align-items: center;
  gap: 25px;
  height: 29px;
  padding: 0 14px 0 17px;
  border-bottom: 1px solid #e4e4e8;
  background: #f5f6f8;
  color: #2a2a50;
}

.tools button {
  gap: 4px;
}

.tools .view {
  gap: 10px;
  margin-left: auto;
  color: #222;
}

.tools .help {
  width: 16px;
  height: 16px;
  border-radius: 8px;
  background: #1787c8;
  color: #fff;
  font-weight: bold;
}

.panes {
  display: flex;
  flex: 1;
  min-height: 0;
}

.tree {
  width: 271px;
  margin: 0;
  padding: 5px 1px 0;
  list-style: none;
  overflow: hidden;
}

.tree li {
  display: flex;
  align-items: center;
  gap: 5px;
  height: 30px;
  padding-left: 15px;
}

.tree li:nth-child(3n) {
  height: 31px;
}

.tree .top {
  padding-left: 30px;
}

.tree .open {
  padding-left: 7px;
}

.tree .tw {
  margin-right: 4px;
  color: #888;
}

.tree .open .tw {
  color: #222;
}

.tree .active {
  border: 1px solid #999;
  background: #d9d9d9;
  padding-left: 29px;
}

.scroll {
  display: flex;
  justify-content: center;
  width: 15px;
  padding-top: 16px;
  background: #f0f0f0;
}

.scroll i {
  width: 2px;
  height: 24px;
  background: #858585;
}

.tree-scroll i {
  height: 232px;
}

.files {
  position: relative;
  flex: 1;
  min-width: 0;
  overflow: hidden;
}

.files table {
  width: 100%;
  table-layout: fixed;
  border-collapse: collapse;
}

.f-name { width: 627px; }
.f-date { width: 137px; }
.f-type { width: 114px; }
.f-size { width: 76px; }

.files th {
  height: 24px;
  padding: 0 6px;
  border-right: 1px solid #e2e2e2;
  color: #4c5578;
  font-weight: normal;
  text-align: left;
}

.files th:first-child {
  padding-left: 32px;
}

.files th:last-child {
  border: none;
}

.files thead::after {
  content: "";
  display: block;
  height: 5px;
}

.sort {
  position: absolute;
  top: -4px;
  left: 689px;
  color: #999;
}

.files td {
  height: 26px;
  padding: 0 6px;
  color: #666;
  white-space: nowrap;
}

.files tr:nth-child(2n) td {
  height: 27px;
}

.files td:first-child {
  padding-left: 20px;
  color: #111;
}

.files td:nth-child(4) {
  text-align: right;
}

.files td svg {
  margin-right: 3px;
  vertical-align: -5px;
}

.files .group td {
  padding-left: 7px;
  color: #26388f;
  font-size: 13px;
}

.files .group svg {
  margin-right: 2px;
  color: #888;
  vertical-align: -3px;
}

.fields {
  display: grid;
  grid-template-columns: 113px 1fr;
  grid-auto-rows: 22px;
  align-items: center;
  gap: 2px 5px;
  height: 96px;
  padding: 11px 4px 0 0;
  background: #f9f9f9;
}

.fields label {
  text-align: right;
}

.field {
  position: relative;
  display: flex;
}

.field input, .field select {
  width: 100%;
  height: 22px;
  padding: 0 5px 2px;
  border: 1px solid #2a86bd;
  border-radius: 2px;
  outline: none;
  background: #fff;
}

.field select {
  padding: 0 3px;
  border-color: #e3e3e3;
  border-bottom-color: #c8c8c8;
  appearance: none;
}

.field svg {
  position: absolute;
  top: 5px;
  right: 3px;
  color: #555;
}

.text-caret {
  position: absolute;
  top: 3px;
  left: 297px;
  width: 1px;
  height: 15px;
  background: #000;
}

.actions {
  position: relative;
  display: flex;
  align-items: center;
  gap: 13px;
  height: 53px;
  padding: 0 17px 4px 9px;
  background: #efefef;
}

.actions .hide {
  gap: 5px;
  margin: 4px auto 0 0;
}

.primary, .cancel {
  height: 24px;
  border: 1px solid #ddd;
  border-radius: 3px;
  background: #fff;
}

.primary {
  width: 86px;
  border-color: #2a86bd;
}

.cancel {
  width: 82px;
}

.grip {
  position: absolute;
  right: 2px;
  bottom: 2px;
}

.pointer {
  position: absolute;
  top: 897px;
  left: 850px;
}
```
